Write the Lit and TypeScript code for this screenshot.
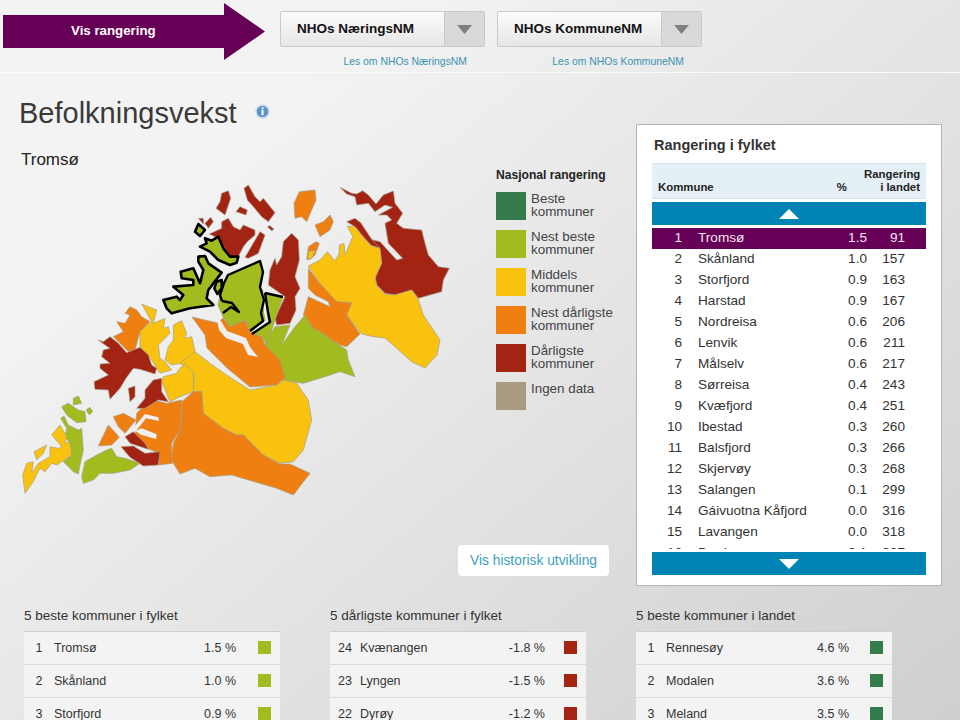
import { LitElement, html, css, svg } from "lit";
import { customElement } from "lit/decorators.js";

const GREEN = "#a2bb1f", DGREEN = "#347c4c", YEL = "#f8c20f", ORA = "#ef7f11", RED = "#a32413", TAN = "#a89b80", FJORD = "#f0f0f0";

type Zone = { c: string; o: [number, number, number]; p: string; k?: number };
const Z3: [number, number, number] = [10, 180, 1 / 3];
const Z4: [number, number, number] = [240, 180, 1 / 3];
const Z5: [number, number, number] = [10, 340, 1 / 3];
const Z8: [number, number, number] = [160, 180, 1 / 3];
const Z9: [number, number, number] = [90, 290, 1 / 3];
const P: [number, number, number] = [0, 0, 1];

const zones: Zone[] = [
  // north-east
  { c: RED, o: Z4, p: "300,22 335,40 350,42 368,32 385,45 408,72 430,45 460,33 465,70 488,100 470,130 490,145 545,150 555,190 565,225 595,260 628,265 610,300 605,335 535,355 515,330 465,345 435,340 410,315 405,290 425,250 420,210 395,195 390,178 420,185 470,240 488,235 445,190 435,130 455,120 440,105 415,105 458,82 435,75 405,95 385,70 350,75 345,50 320,42" },
  { c: RED, o: Z4, p: "320,125 345,115 362,128 380,155 395,178 420,205 395,198 365,165 345,140" },
  { c: YEL, o: Z4, p: "205,258 240,240 262,215 285,242 297,222 298,195 312,190 315,225 338,170 322,138 345,140 365,165 390,195 420,205 425,250 405,295 412,320 435,342 465,345 515,330 535,358 550,405 590,465 600,480 591,525 555,564 516,546 435,474 400,470 365,462 320,405 335,368 290,370 240,310" },
  { c: ORA, o: Z4, p: "205,265 235,305 290,365 335,368 320,405 360,462 320,500 300,495 250,465 215,440 190,405 205,350 270,380 265,365 225,345 205,325" },
  { c: GREEN, o: Z4, p: "195,405 215,440 255,465 300,497 320,510 325,540 345,590 300,575 255,590 190,610 120,600 85,550 75,490 105,440 150,435 125,495 165,440" },
  { c: ORA, o: Z4, p: "178,35 225,30 228,60 215,90 200,125 185,110 165,115 162,70" },
  { c: ORA, o: Z4, p: "225,135 250,125 270,105 280,125 270,150 240,170" },
  { c: ORA, o: Z4, p: "205,200 228,185 238,190 225,225 210,238 200,238" },
  { c: YEL, o: Z4, p: "206,214 226,212 215,235 203,238" },
  { c: RED, o: Z4, p: "130,185 155,160 175,180 178,240 165,290 180,325 165,350 168,390 150,430 110,435 105,415 135,350 85,315 90,270 105,235 110,255 125,230" },
  // north islands
  { c: RED, o: Z8, p: "185,40 205,32 212,55 195,105 168,85 180,65" },
  { c: RED, o: Z8, p: "228,95 240,80 262,90 258,105" },
  { c: RED, o: Z8, p: "252,25 265,15 285,50 300,65 310,55 345,98 325,125 305,110 280,80 262,60" },
  { c: RED, o: Z8, p: "322,140 330,137 342,148 335,152" },
  { c: RED, o: Z8, p: "148,162 185,145 185,125 205,115 220,140 240,150 250,135 285,150 285,165 262,185 250,200 235,230 210,230 195,205 175,175" },
  { c: RED, o: Z8, p: "255,232 300,155 315,165 295,220 265,235" },
  { c: RED, o: Z8, p: "115,115 130,115 130,132" },
  { c: RED, o: Z8, p: "135,130 152,112 160,125 145,145" },
  // central
  { c: GREEN, o: P, p: "220,295 228,275 260,261 263,272 260,287 266,295 264,312 266,320 250,331 245,320 230,327 223,317 218,305" },
  { c: GREEN, o: P, p: "266,294 283,297 275,320 267,345 262,337 251,333 268,322 267,312" },
  { c: ORA, o: P, p: "192,317 218,323 223,318 230,327 245,320 250,332 262,337 265,345 280,360 285,378 277,385 250,387 227,368 207,348 205,335" },
  { c: FJORD, o: P, p: "217,320 221,321 227,331 246,338 250,347 258,357 248,355 243,344 226,338 219,330" },
  // west-middle
  { c: ORA, o: Z9, p: "80,95 105,100 120,75 105,70 120,50 140,60 155,80 180,95 150,125 135,180 115,185 90,160 70,140 100,125" },
  { c: YEL, o: Z9, p: "155,42 200,60 190,100 225,85 220,115 235,110 240,130 205,165 210,205 225,215 245,240 210,250 195,225 175,195 150,170 150,125 185,95" },
  { c: YEL, o: Z9, p: "250,105 275,92 290,130 285,145 305,140 310,160 315,185 290,215 275,220 245,225 225,210 235,170 250,150" },
  { c: RED, o: Z9, p: "25,150 40,155 60,140 85,160 110,188 150,172 175,195 185,225 200,235 195,252 150,238 130,235 108,265 90,295 60,328 55,300 15,298 12,275 55,255 30,235 30,222 60,220 35,200 40,180 60,175 45,165" },
  { c: YEL, o: Z5, p: "510,70 555,35 600,70 650,105 720,150 800,135 825,120 860,130 895,180 905,240 880,330 850,365 810,370 760,345 700,285 680,285 640,265 580,220 575,155 550,155 552,100" },
  { c: YEL, o: Z5, p: "460,110 500,100 505,90 525,70 550,100 550,155 510,170 480,185 455,125" },
  { c: ORA, o: Z5, p: "550,155 575,155 580,220 640,265 680,285 700,285 760,345 810,372 840,372 900,400 850,465 800,445 665,405 600,410 555,385 510,402 490,370 485,355 490,310 510,270 515,185" },
  { c: ORA, o: Z5, p: "380,220 420,178 470,190 515,180 510,270 485,310 487,370 447,375 447,340 400,320 375,290" },
  { c: FJORD, o: Z5, p: "345,292 372,262 405,222 445,232 447,243 408,235 390,258 375,275" },
  { c: FJORD, o: Z5, p: "375,272 395,265 440,283 438,297 395,285" },
  { c: RED, o: Z9, p: "115,295 135,288 135,320 120,335" },
  { c: RED, o: Z9, p: "165,300 190,270 215,265 215,305 235,335 205,330 165,355 140,355 165,325" },
  { c: RED, o: Z5, p: "333,320 370,318 405,340 450,335 445,375 400,378 360,352" },
  { c: RED, o: Z5, p: "345,290 370,275 405,310 415,328 360,310" },
  { c: ORA, o: Z5, p: "265,318 295,255 328,292 305,315" },
  { c: ORA, o: Z5, p: "310,230 340,220 378,240 345,280 325,260" },
  // south-west
  { c: GREEN, o: Z5, p: "190,175 205,168 215,190 190,195" },
  { c: GREEN, o: Z5, p: "155,200 175,190 205,210 225,215 228,245 200,248 170,225" },
  { c: GREEN, o: Z5, p: "228,210 240,202 248,215 238,225" },
  { c: GREEN, o: Z5, p: "152,235 162,228 175,255 205,270 215,265 220,330 210,375 205,402 190,395 160,365 185,345 180,310 165,290 170,265" },
  { c: YEL, o: Z5, p: "125,285 150,255 170,290 165,310 180,305 185,345 140,375 125,370 105,395 90,385 70,425 45,460 38,405 50,370 70,365 65,400 85,370 120,350 120,320 145,325 155,320 130,290" },
  { c: YEL, o: Z5, p: "72,335 110,315 100,340 80,360" },
  { c: GREEN, o: Z5, p: "225,365 260,345 290,330 305,325 320,350 345,355 390,370 360,390 310,400 270,400 250,420 220,430 215,410" },
];

const tromso: Zone[] = [
  { c: GREEN, o: Z3, p: "565,132 585,150 570,168 555,155" },
  { c: GREEN, o: Z3, p: "570,200 590,190 585,175 605,182 625,170 640,205 660,230 685,230 680,248 660,255 625,240 600,215" },
  { c: GREEN, o: Z3, p: "565,230 585,228 595,250 635,278 610,310 595,330 590,355 610,375 540,385 485,400 470,385 460,360 500,350 510,360 520,345 490,320 550,315 550,300 515,295 512,275 550,265 570,310 580,270 565,245" },
  { c: GREEN, o: Z3, p: "620,305 635,300 635,325 622,342 613,325" },
];

const blackLines = [
  "222,301 220,295 224,283 228,275 260,261 263,272 260,287 264,300 261,313 263,321 250,331",
  "265,293 283,297",
  "265,293 268,312 270,322 252,334",
  "222,301 232,303 239,312 231,307 223,313",
];

const table: [number, string, string, string][] = [
  [1, "Tromsø", "1.5", "91"], [2, "Skånland", "1.0", "157"], [3, "Storfjord", "0.9", "163"],
  [4, "Harstad", "0.9", "167"], [5, "Nordreisa", "0.6", "206"], [6, "Lenvik", "0.6", "211"],
  [7, "Målselv", "0.6", "217"], [8, "Sørreisa", "0.4", "243"], [9, "Kvæfjord", "0.4", "251"],
  [10, "Ibestad", "0.3", "260"], [11, "Balsfjord", "0.3", "266"], [12, "Skjervøy", "0.3", "268"],
  [13, "Salangen", "0.1", "299"], [14, "Gáivuotna Kåfjord", "0.0", "316"], [15, "Lavangen", "0.0", "318"],
  [16, "Bardu", "-0.1", "327"],
];

const legend: [string, string][] = [
  [DGREEN, "Beste kommuner"], [GREEN, "Nest beste kommuner"], [YEL, "Middels kommuner"],
  [ORA, "Nest dårligste kommuner"], [RED, "Dårligste kommuner"], [TAN, "Ingen data"],
];

const lists: { title: string; color: string; cls: string; rows: [number, string, string][] }[] = [
  { title: "5 beste kommuner i fylket", color: GREEN, cls: "a", rows: [[1, "Tromsø", "1.5 %"], [2, "Skånland", "1.0 %"], [3, "Storfjord", "0.9 %"]] },
  { title: "5 dårligste kommuner i fylket", color: RED, cls: "b", rows: [[24, "Kvænangen", "-1.8 %"], [23, "Lyngen", "-1.5 %"], [22, "Dyrøy", "-1.2 %"]] },
  { title: "5 beste kommuner i landet", color: DGREEN, cls: "c", rows: [[1, "Rennesøy", "4.6 %"], [2, "Modalen", "3.6 %"], [3, "Meland", "3.5 %"]] },
];

@customElement("app-root")
export class AppRoot extends LitElement {
  static styles = css`
    :host {
      display: block; width: 960px; height: 720px; overflow: hidden;
      font-family: "Liberation Sans", Arial, sans-serif; color: #333;
      background: linear-gradient(140deg, #f3f3f3 22%, #cfcfcf 100%);
    }
    .top { display: flex; align-items: flex-start; height: 72px; box-sizing: border-box; padding: 3px 0 0 3px; }
    .divider { height: 1px; background: #fafafa; }
    .arrow {
      width: 262px; height: 57px; background: #660057; color: #fff; font-weight: bold; font-size: 13.3px;
      clip-path: polygon(0 12px, 221px 12px, 221px 0, 100% 50%, 221px 100%, 221px 45px, 0 45px);
      display: flex; align-items: center; padding-left: 68px; box-sizing: border-box; padding-bottom: 3px;
    }
    .pick { margin: 8px 12px 0 0; width: 205px; }
    .pick.first { margin-left: 15px; }
    .dd {
      height: 36px; box-sizing: border-box; display: flex; border: 1px solid #c9c9c9; border-radius: 2px;
      background: linear-gradient(#fbfbfb, #e6e6e6);
    }
    .dd b { flex: 1; font-size: 13.5px; color: #111; line-height: 34px; padding-left: 16px; }
    .dd i { width: 39px; background: #d9d9d9; border-left: 1px solid #c9c9c9; display: flex; align-items: center; justify-content: center; }
    .dd svg { display: block; }
    .link { font-size: 10.4px; color: #3b93b2; text-align: right; padding-right: 18px; line-height: 12px; margin-top: 9px; }
    .main { display: grid; grid-template-columns: 636px 306px; }
    .left { display: flex; flex-direction: column; }
    .titlerow { display: flex; align-items: center; gap: 18px; margin: 23px 0 0 19px; height: 34px; }
    h1 { margin: 0; font-weight: normal; font-size: 29px; line-height: 34px; color: #3a3a3a; }
    .info { display: block; margin-top: -4px; }
    h2 { margin: 22px 0 0 21px; font-weight: normal; font-size: 17px; line-height: 16px; color: #222; }
    .maprow { display: flex; margin: 0 0 0 20px; }
    .map { display: block; flex: none; }
    .legend { margin-left: 16px; width: 124px; }
    .legend h3 { margin: 0 0 10px; font-size: 12.1px; line-height: 14px; color: #222; }
    .lg { display: flex; gap: 5px; height: 28px; margin-bottom: 10px; }
    .sw { width: 30px; height: 28px; flex: none; }
    .lt { font-size: 13.4px; line-height: 13px; color: #444; width: 90px; }
    .hist {
      align-self: flex-end; margin: 38px 27px 0 0; width: 151px; height: 31px; box-sizing: border-box; background: #fff; border-radius: 4px;
      color: #3d9fbe; font-size: 13.8px; line-height: 31px; text-align: center;
    }
    .panel {
      margin-top: 51px; background: #fff; border: 1px solid #b4b4b4; padding: 11px 15px 10px; box-sizing: border-box; height: 462px;
    }
    .panel h4 { margin: 0 0 9px 2px; font-size: 14.5px; line-height: 18px; color: #333; }
    .head {
      height: 36px; box-sizing: border-box; background: #e5f0f6; border-top: 1px solid #d5e3ec; border-bottom: 1px solid #d5e3ec;
      display: flex; align-items: flex-end; padding: 0 6px 4px; font-size: 11.4px; font-weight: bold; line-height: 13px; color: #222;
    }
    .head .k { flex: 1; }
    .head .p { margin-right: 17px; }
    .head .r { width: 56px; text-align: right; }
    .bar { height: 23px; background: #0084b5; margin: 3px 0; display: flex; align-items: center; justify-content: center; }
    .rows { height: 321px; overflow: hidden; }
    .row {
      display: grid; grid-template-columns: 30px 145px 40px 38px; column-gap: 0; height: 21px; line-height: 20px; font-size: 13.6px; color: #333;
    }
    .row .n { text-align: right; }
    .row .nm { padding-left: 16px; white-space: nowrap; }
    .row .v { text-align: right; }
    .row.on { background: #660057; color: #f2e6ee; }
    .bottom { display: grid; grid-template-columns: repeat(3, 256px); column-gap: 50px; padding-left: 24px; margin-top: 22px; }
    .bottom h5 { margin: 0 0 7px; font-weight: normal; font-size: 13.5px; line-height: 16px; color: #333; }
    .blist { border-top: 1px solid #cfcfcf; }
    .brow {
      display: grid; grid-template-columns: 30px 1fr auto 13px; align-items: center; height: 33px; box-sizing: border-box;
      background: #f3f3f3; border-bottom: 1px solid #dadada; padding-right: 9px; font-size: 12.5px; color: #333;
    }
    .brow .n { text-align: center; }
    .brow .v { margin-right: 22px; }
    .blist.b .v { margin-right: 19px; }
    .blist.c .v { margin-right: 21px; }
    .brow .sq { width: 13px; height: 13px; margin-bottom: 2px; }
  `;

  private tri(fill: string, w: number, h: number, up = false) {
    const pts = up ? `0,${h} ${w},${h} ${w / 2},0` : `0,0 ${w},0 ${w / 2},${h}`;
    return html`<svg width=${w} height=${h} viewBox="0 0 ${w} ${h}"><polygon points=${pts} fill=${fill}></polygon></svg>`;
  }

  private zone(z: Zone, stroke: string, sw: number) {
    const [x, y, s] = z.o;
    return svg`<polygon transform="translate(${x} ${y}) scale(${s})" points=${z.p} fill=${z.c} stroke=${stroke}
      stroke-width=${sw} stroke-linejoin="round" vector-effect="non-scaling-stroke"></polygon>`;
  }

  private mapSvg() {
    return html`<svg class="map" width="460" height="339" viewBox="20 168 460 339">
      ${zones.map((z) => this.zone(z, z.c === FJORD ? "none" : "#a59f8c", 0.7))}
      ${tromso.map((z) => this.zone(z, "#000", 2.6))}
      <polyline points="263,292 265,312 267,322 254,330" fill="none" stroke="#f0f0f0" stroke-width="2"></polyline>
      ${blackLines.map((l) => svg`<polyline points=${l} fill="none" stroke="#000" stroke-width="2.4" stroke-linejoin="round"></polyline>`)}
    </svg>`;
  }

  render() {
    return html`
      <div class="top">
        <div class="arrow">Vis rangering</div>
        ${["NHOs NæringsNM", "NHOs KommuneNM"].map((n, i) => html`
          <div class="pick ${i === 0 ? "first" : ""}">
            <div class="dd"><b>${n}</b><i>${this.tri("#7f7f7f", 15, 9)}</i></div>
            <div class="link">Les om ${n}</div>
          </div>`)}
      </div>
      <div class="divider"></div>
      <div class="main">
        <div class="left">
          <div class="titlerow">
            <h1>Befolkningsvekst</h1>
            <svg class="info" width="15" height="15" viewBox="0 0 15 15">
              <circle cx="7.5" cy="7.5" r="7.4" fill="#d3e2f1"></circle>
              <circle cx="7.5" cy="7.5" r="5.8" fill="#5f93cb"></circle>
              <rect x="6.6" y="3.3" width="1.9" height="1.9" fill="#fff"></rect>
              <rect x="6.6" y="6" width="1.9" height="5.2" fill="#fff"></rect>
            </svg>
          </div>
          <h2>Tromsø</h2>
          <div class="maprow">
            ${this.mapSvg()}
            <div class="legend">
              <h3>Nasjonal rangering</h3>
              ${legend.map(([c, t]) => html`<div class="lg"><div class="sw" style="background:${c}"></div><div class="lt">${t}</div></div>`)}
            </div>
          </div>
          <div class="hist">Vis historisk utvikling</div>
        </div>
        <div class="panel">
          <h4>Rangering i fylket</h4>
          <div class="head">
            <span class="k">Kommune</span><span class="p">%</span><span class="r">Rangering<br />i landet</span>
          </div>
          <div class="bar">${this.tri("#fff", 20, 10, true)}</div>
          <div class="rows">
            ${table.map(([n, nm, p, r], i) => html`
              <div class="row ${i === 0 ? "on" : ""}">
                <span class="n">${n}</span><span class="nm">${nm}</span><span class="v">${p}</span><span class="v">${r}</span>
              </div>`)}
          </div>
          <div class="bar">${this.tri("#fff", 20, 10)}</div>
        </div>
      </div>
      <div class="bottom">
        ${lists.map((l) => html`
          <div>
            <h5>${l.title}</h5>
            <div class="blist ${l.cls}">
              ${l.rows.map(([n, nm, v]) => html`
                <div class="brow">
                  <span class="n">${n}</span><span>${nm}</span><span class="v">${v}</span>
                  <span class="sq" style="background:${l.color}"></span>
                </div>`)}
            </div>
          </div>`)}
      </div>
    `;
  }
}
